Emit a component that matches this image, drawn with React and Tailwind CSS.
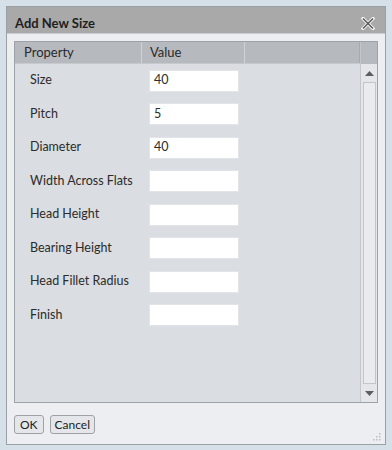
import React from "react";

const rows = [
  { name: "Size", value: "40" },
  { name: "Pitch", value: "5" },
  { name: "Diameter", value: "40" },
  { name: "Width Across Flats", value: "" },
  { name: "Head Height", value: "" },
  { name: "Bearing Height", value: "" },
  { name: "Head Fillet Radius", value: "" },
  { name: "Finish", value: "" },
];

const font = { fontFamily: 'Lato, "Open Sans", sans-serif' };

export default function App() {
  return (
    <div
      className="w-[392px] h-[450px] bg-[#d6e0e9] pt-[6px] px-[6px] pb-[5px] flex"
      style={font}
    >
      <div className="flex-1 flex flex-col border border-[#9aa0a6] bg-[#eceef1]">
        {/* Title bar */}
        <div className="h-[27px] bg-[#a9a9a9] flex items-center justify-between pl-[8px] pr-[10px] pt-[7px] border-b border-[#c9cbce]">
          <span className="text-[13px] leading-none font-bold text-[#1e1e1e]">Add New Size</span>
          <svg width="14" height="13" viewBox="0 0 14 13">
            <path d="M2 1.5 L12 11.5 M12 1.5 L2 11.5" stroke="#f4f4f4" strokeWidth="3.2" strokeLinecap="square" />
            <path d="M2 1.5 L12 11.5 M12 1.5 L2 11.5" stroke="#555" strokeWidth="1.4" />
          </svg>
        </div>

        {/* Body */}
        <div className="flex-1 flex flex-col px-[7px] pt-[7px] pb-[10px]">
          <div className="flex-1 flex border border-[#9da2a8] bg-[#dadde1]">
            <div className="flex-1 flex flex-col">
              {/* Header */}
              <div className="h-[22px] bg-[#b6b9bd] flex text-[13px] text-[#2a2a2a] border-b border-[#c6c9cd]">
                <div className="w-[127px] pl-[9px] flex items-center border-r border-[#d0d2d5]">Property</div>
                <div className="w-[103px] pl-[8px] flex items-center border-r border-[#d0d2d5]">Value</div>
                <div className="flex-1 border-r border-[#a6a9ad]"></div>
              </div>
              {/* Rows */}
              <div className="flex flex-col">
                {rows.map((r) => (
                  <div key={r.name} className="h-[33.5px] flex items-center text-[12.5px] text-[#2b2b2b]">
                    <div className="w-[134px] pl-[15px]">{r.name}</div>
                    <div className="w-[90px] h-[22px] bg-white border border-[#e2e4e7] flex items-center pl-[4px]">
                      {r.value}
                    </div>
                  </div>
                ))}
              </div>
            </div>
            {/* Scrollbar */}
            <div className="w-[17px] bg-[#e4e6e9] border-l border-[#c3c6ca] flex flex-col items-center">
              <div className="h-[22px] w-full bg-[#b6b9bd]"></div>
              <div className="h-[18px] flex items-center justify-center">
                <svg width="9" height="5" viewBox="0 0 9 5"><path d="M0 5 L4.5 0 L9 5 Z" fill="#5a5d61" /></svg>
              </div>
              <div className="flex-1 w-[13px] border border-[#c2c5c9] bg-[#e9ebee]"></div>
              <div className="h-[18px] flex items-center justify-center">
                <svg width="9" height="5" viewBox="0 0 9 5"><path d="M0 0 L9 0 L4.5 5 Z" fill="#5a5d61" /></svg>
              </div>
            </div>
          </div>

          {/* Buttons */}
          <div className="flex items-center gap-[6px] mt-[12px] relative">
            <button className="h-[19px] px-[5px] text-[12px] leading-none text-[#222] border border-[#9ea2a6] rounded-[3px] bg-[#e4e6e9]">OK</button>
            <button className="h-[19px] px-[4px] text-[12px] leading-none text-[#222] border border-[#9ea2a6] rounded-[3px] bg-[#e4e6e9]">Cancel</button>
            <svg className="absolute right-[-3px] bottom-[-7px]" width="10" height="10" viewBox="0 0 10 10">
              <rect x="8" y="2" width="1.5" height="1.5" fill="#b9bcc0" />
              <rect x="8" y="5" width="1.5" height="1.5" fill="#b9bcc0" />
              <rect x="5" y="5" width="1.5" height="1.5" fill="#b9bcc0" />
              <rect x="8" y="8" width="1.5" height="1.5" fill="#b9bcc0" />
              <rect x="5" y="8" width="1.5" height="1.5" fill="#b9bcc0" />
              <rect x="2" y="8" width="1.5" height="1.5" fill="#b9bcc0" />
            </svg>
          </div>
        </div>
      </div>
    </div>
  );
}
